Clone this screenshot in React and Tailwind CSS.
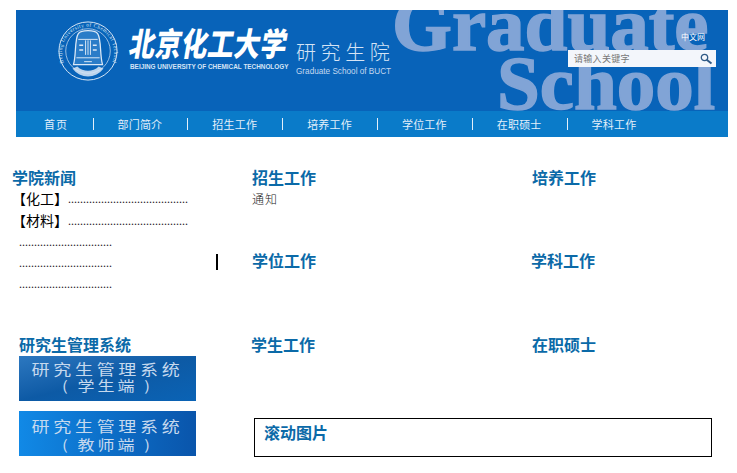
import React from 'react';

const cjk = "font-['Noto_Sans_CJK_SC',sans-serif]";
const navItems = ['首页', '部门简介', '招生工作', '培养工作', '学位工作', '在职硕士', '学科工作'];

const Seal = () => (
  <svg width="62" height="62" viewBox="0 0 64 64" fill="none" stroke="#dbe8f6" className="shrink-0">
    <circle cx="32" cy="32" r="30" strokeWidth="1" />
    <circle cx="32" cy="32" r="23" strokeWidth="0.7" />
    <defs>
      <path id="sealArc" d="M7 44 A27 27 0 1 1 57 44" />
    </defs>
    <text fontSize="5.4" fill="#dbe8f6" stroke="none" fontFamily="Liberation Serif, serif" letterSpacing="0.5">
      <textPath href="#sealArc">Beijing University of Chemical Technology</textPath>
    </text>
    <path d="M17 46 C20 36 18 20 22 14 C25 10 39 10 42 14 C46 20 44 36 47 46 Z" fill="#2a7cc8" strokeWidth="1.3" />
    <path d="M22 20 H42 M32 21 V36 M29.5 21 V36 M34.5 21 V36 M20 39 H44 M28 43 H36" strokeWidth="1" />
    <path d="M23 26 H27 M23 31 H27 M37 26 H41 M37 31 H41" strokeWidth="1.6" />
    <path d="M16 50 C24 61 40 61 48 50 L43 48 C37 54 27 54 21 48 Z" fill="#dbe8f6" stroke="none" opacity="0.85" />
  </svg>
);

const Banner = () => (
  <div className="relative mx-4 mt-[10px] w-[712px] overflow-hidden bg-[#0863b9]">
    <div className="relative h-[101px] overflow-hidden">
      {/* background lettering */}
      <div className="absolute left-[376px] top-[-24px] whitespace-nowrap font-['Liberation_Serif',serif] text-[77px] font-bold leading-[76px] text-[#81a4d6] [-webkit-text-stroke:1.5px_#81a4d6]">
        Graduate
      </div>
      <div className="absolute left-[481px] top-[35px] whitespace-nowrap font-['Liberation_Serif',serif] text-[77px] font-bold leading-[76px] text-[#81a4d6] [-webkit-text-stroke:1.5px_#81a4d6]">
        School
      </div>

      <div className="relative flex items-start pl-[41px] pt-[10px]">
        <Seal />
        <div className="ml-[11px] w-[158px] shrink-0 pt-[3px]">
          <div className={`${cjk} origin-left -skew-x-12 scale-y-[1.25] whitespace-nowrap text-[26px] font-black leading-[38px] tracking-[0.3px] text-white`}>
            北京化工大学
          </div>
          <div className="mt-[1px] whitespace-nowrap font-['Liberation_Sans',sans-serif] text-[6.4px] font-bold leading-[10px] text-[#d5e4f5]">
            BEIJING UNIVERSITY OF CHEMICAL TECHNOLOGY
          </div>
        </div>
        <div className="ml-[8px] shrink-0 pt-[19px]">
          <div className={`${cjk} whitespace-nowrap text-[20px] font-light leading-[26px] tracking-[4.6px] text-[#d5e4f5]`}>
            研究生院
          </div>
          <div className="mt-[2px] whitespace-nowrap font-['Liberation_Sans',sans-serif] text-[8.2px] leading-[10px] text-[#c3d8f0]">
            Graduate School of BUCT
          </div>
        </div>
      </div>

      <div className={`absolute left-[665px] top-[22px] ${cjk} text-[8px] leading-[10px] text-white`}>中文网</div>
      <div className="absolute left-[552px] top-[40px] flex h-[17px] w-[148px] items-center justify-between bg-[#f3f6fb] pl-[6px] pr-[3px]">
        <span className={`${cjk} text-[9px] leading-none tracking-[0.3px] text-[#777]`}>请输入关键字</span>
        <svg width="14" height="12" viewBox="0 0 14 12" fill="none" stroke="#2f5a86">
          <circle cx="5.5" cy="4.5" r="3.2" strokeWidth="1.3" />
          <path d="M8 7 L12.5 10.5" strokeWidth="2" />
        </svg>
      </div>
    </div>
    <nav className={`flex h-[26px] items-center gap-[24px] bg-[#0a7bc9] pl-[28px] ${cjk} text-[11px] leading-none tracking-[0.2px] text-[#e3effa]`}>
      {navItems.map((item, index) => (
        <React.Fragment key={item}>
          {index > 0 && <span className="h-[12px] w-[1px] bg-[#e3effa]" />}
          <span className={index === 0 ? 'w-[24.5px] whitespace-nowrap tracking-[1px]' : 'whitespace-nowrap pr-[1px]'}>{item}</span>
        </React.Fragment>
      ))}
    </nav>
  </div>
);

const Heading = ({ children, className = '' }) => (
  <h2 className={`${cjk} whitespace-nowrap text-[16px] font-bold leading-[22px] text-[#0b6aa8] ${className}`}>
    {children}
  </h2>
);

const Dots = ({ count }) => (
  <span className="font-['Liberation_Serif',serif] text-[12px] text-[#222]">{'.'.repeat(count)}</span>
);

const NewsRow = ({ label }) => (
  <div className="flex h-[22px] items-center whitespace-nowrap">
    <span className={`${cjk} pb-[2px] text-[14px] leading-none text-black`}>{label}</span>
    <Dots count={40} />
  </div>
);

const DotsRow = ({ children, className = 'h-[20px]' }) => (
  <div className={`flex items-center pl-[7px] ${className}`}>
    <span className="w-[93px] overflow-hidden pb-[4px] leading-none"><Dots count={31} /></span>
    {children}
  </div>
);

const SystemButton = ({ background, title, sub, lineHeight, className = '' }) => (
  <div className={`ml-[7px] flex h-[45px] w-[177px] flex-col items-center justify-center ${background} ${cjk} text-[#c6d9ee] ${className}`}>
    <div className={`${lineHeight} scale-y-[0.8] whitespace-nowrap text-[18px] tracking-[3.7px]`}>{title}</div>
    <div className={`${lineHeight} scale-y-[0.8] whitespace-nowrap text-[17px] tracking-[3px]`}>{sub}</div>
  </div>
);

const App = () => {
  return (
    <div className="h-[473px] w-[737px] overflow-hidden bg-white">
      <Banner />
      <div className="flex pl-[12px] pt-[29px]">
        <div className="w-[240px] shrink-0">
          <Heading>学院新闻</Heading>
          <NewsRow label="【化工】" />
          <NewsRow label="【材料】" />
          <DotsRow />
          <DotsRow className="h-[22px]">
            <span className="ml-[104px] h-[16px] w-[2px] -translate-y-[1px] bg-black" />
          </DotsRow>
          <DotsRow />
          <Heading className="ml-[7px] mt-[39px]">研究生管理系统</Heading>
          <SystemButton
            background="bg-gradient-to-br from-[#2c78c0] via-[#0d5aa5] to-[#0a63b5] pb-[3px]"
            title="研究生管理系统"
            sub="( 学生端 )"
            lineHeight="leading-[16px]"
            className="mt-[1px]"
          />
          <SystemButton
            background="bg-gradient-to-r from-[#1189e6] to-[#0a55ab] pt-[3px]"
            title="研究生管理系统"
            sub="( 教师端 )"
            lineHeight="leading-[18px]"
            className="mt-[10px]"
          />
        </div>

        <div className="flex-1">
          <div className="grid h-[83px] grid-cols-[280px_1fr]">
            <div>
              <Heading>招生工作</Heading>
              <p className={`${cjk} pt-[1px] text-[12px] font-light leading-[20px] tracking-[1px] text-[#222]`}>通知</p>
            </div>
            <Heading>培养工作</Heading>
          </div>
          <div className="grid h-[84px] grid-cols-[279px_1fr]">
            <Heading>学位工作</Heading>
            <Heading>学科工作</Heading>
          </div>
          <div className="-ml-[1px] grid h-[73px] grid-cols-[281px_1fr]">
            <Heading>学生工作</Heading>
            <Heading>在职硕士</Heading>
          </div>
          <div className="ml-[2px] mt-[12px] h-[39px] w-[458px] border border-black pl-[9px] pt-[2px]">
            <Heading>滚动图片</Heading>
          </div>
        </div>
      </div>
    </div>
  );
};

export default App;
